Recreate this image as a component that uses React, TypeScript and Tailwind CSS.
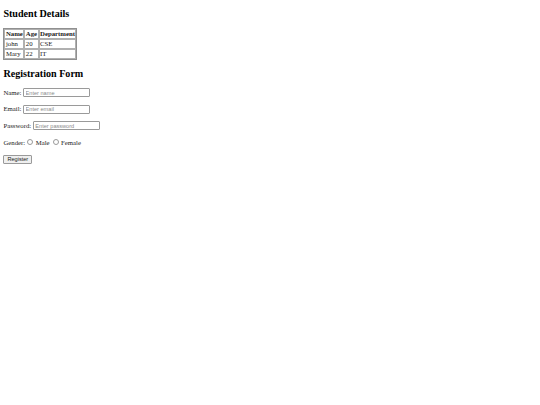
const students = [
  { name: "john", age: 20, dept: "CSE" },
  { name: "Mary", age: 22, dept: "IT" },
]

const cell = "border border-[#b0b0b0] px-[0.5px] py-0 text-left align-middle leading-[7.8px]"
const field =
  "ml-[1.7px] w-[67px] h-[9px] border border-[#9a9a9a] rounded-[1px] px-[1.5px] font-['Liberation_Sans',sans-serif] text-[5.6px] leading-[7px] placeholder:text-[#8a8a8a]"

export default function App() {
  return (
    <div className="min-h-screen bg-white px-[3.4px] pb-[3.4px] text-[#1a1a1a] font-['Liberation_Serif',serif] text-[6.75px] leading-[7.8px]">
      <h2 className="mt-0 pt-[8.4px] mb-[8.4px] text-[10.1px] font-bold leading-[11.6px] text-black">Student Details</h2>

      <table className="border border-[#909090] border-separate border-spacing-[0.84px]">
        <thead>
          <tr>
            <th className={`${cell} font-bold`}>Name</th>
            <th className={`${cell} font-bold`}>Age</th>
            <th className={`${cell} font-bold`}>Department</th>
          </tr>
        </thead>
        <tbody>
          {students.map((s) => (
            <tr key={s.name}>
              <td className={cell}>{s.name}</td>
              <td className={cell}>{s.age}</td>
              <td className={cell}>{s.dept}</td>
            </tr>
          ))}
        </tbody>
      </table>

      <h2 className="mt-[8.4px] mb-[8.4px] text-[10.1px] font-bold leading-[11.6px] text-black">Registration Form</h2>

      <form className="flex flex-col gap-[7.6px]">
        <div className="flex items-center h-[9px]">
          <label>Name:</label>
          <input type="text" placeholder="Enter name" className={field} />
        </div>
        <div className="flex items-center h-[9px]">
          <label>Email:</label>
          <input type="email" placeholder="Enter email" className={field} />
        </div>
        <div className="flex items-center h-[9px]">
          <label>Password:</label>
          <input type="password" placeholder="Enter password" className={field} />
        </div>
        <div className="flex items-center h-[9px]">
          <span>Gender:</span>
          <span className="ml-[2px] inline-block w-[6px] h-[6px] rounded-full border border-[#9a9a9a]" />
          <span className="ml-[2.5px]">Male</span>
          <span className="ml-[3px] inline-block w-[6px] h-[6px] rounded-full border border-[#9a9a9a]" />
          <span className="ml-[2.5px]">Female</span>
        </div>
        <div className="flex items-center h-[9px]">
          <button
            type="button"
            className="flex items-center h-[9px] px-[3px] bg-[#efefef] border border-[#9a9a9a] rounded-[1px] font-['Liberation_Sans',sans-serif] text-[5.6px] leading-[7px]"
          >
            Register
          </button>
        </div>
      </form>
    </div>
  )
}
